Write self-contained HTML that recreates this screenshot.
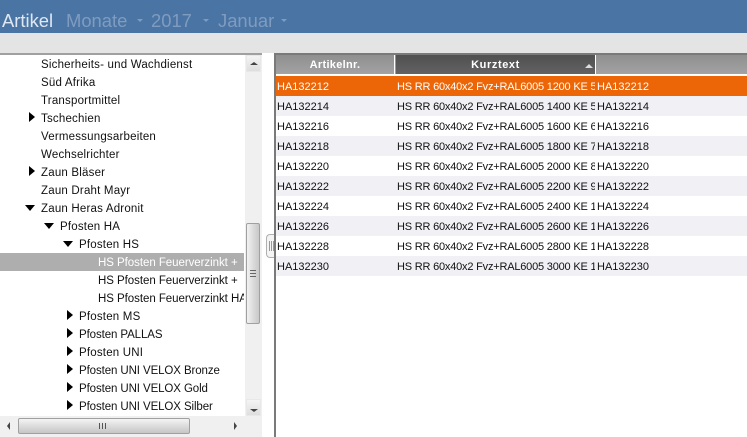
<!DOCTYPE html>
<html><head><meta charset="utf-8">
<style>
html,body{margin:0;padding:0}
body{width:747px;height:437px;position:relative;overflow:hidden;background:#fff;font-family:"Liberation Sans",sans-serif;font-size:11.5px;color:#111}
div{position:absolute;white-space:nowrap;box-sizing:border-box}
#top{left:0;top:0;width:747px;height:33px;background:#4a74a3}
.t{top:10px;font-size:18.4px;line-height:22px;color:#7f9cc0}
.c{top:19px;width:0;height:0;border-left:3px solid transparent;border-right:3px solid transparent;border-top:3px solid #7f9cc0}
#bar{left:0;top:33px;width:747px;height:20px;background:#e4e4e4}
.n{line-height:18px;height:18px;letter-spacing:.2px}
.p{letter-spacing:-.1px}
.h{letter-spacing:-.05px}
.r{width:0;height:0;border-top:5.5px solid transparent;border-bottom:5.5px solid transparent;border-left:6px solid #000}
.d{width:0;height:0;border-left:5.5px solid transparent;border-right:5.5px solid transparent;border-top:6px solid #000}
.row{left:276px;width:471px;height:20px;line-height:20px;font-size:11px}
.row span{position:absolute;top:1px;overflow:hidden;white-space:nowrap}
.a{left:1px;width:116px}.b{left:121px;width:198px;letter-spacing:-.2px}.e{left:321px;width:150px}
</style></head><body>
<div id="top"></div>
<div class="t" style="left:2px;color:#dfe8f2">Artikel</div>
<div class="t" style="left:66px">Monate</div><div class="c" style="left:137px"></div>
<div class="t" style="left:151px">2017</div><div class="c" style="left:203px"></div>
<div class="t" style="left:218px">Januar</div><div class="c" style="left:281px"></div>
<div id="bar"></div>
<div style="left:0;top:53px;width:262px;height:2px;background:#a0a0a0"></div>
<div style="left:0;top:253px;width:244px;height:18px;background:#aeaeae"></div>
<div style="left:0;top:56px;width:244px;height:360px;overflow:hidden">
<div class="n" style="left:41px;top:0">Sicherheits- und Wachdienst</div>
<div class="n" style="left:41px;top:18px">Süd Afrika</div>
<div class="n" style="left:41px;top:36px">Transportmittel</div>
<div class="n" style="left:41px;top:54px">Tschechien</div>
<div class="n" style="left:41px;top:72px">Vermessungsarbeiten</div>
<div class="n" style="left:41px;top:90px">Wechselrichter</div>
<div class="n" style="left:41px;top:108px">Zaun Bläser</div>
<div class="n" style="left:41px;top:126px">Zaun Draht Mayr</div>
<div class="n" style="left:41px;top:144px">Zaun Heras Adronit</div>
<div class="n" style="left:60px;top:162px">Pfosten HA</div>
<div class="n" style="left:79px;top:180px">Pfosten HS</div>
<div class="n h" style="left:98px;top:198px;color:#fff">HS Pfosten Feuerverzinkt +</div>
<div class="n h" style="left:98px;top:216px">HS Pfosten Feuerverzinkt +</div>
<div class="n h" style="left:98px;top:234px">HS Pfosten Feuerverzinkt HA</div>
<div class="n" style="left:79px;top:252px">Pfosten MS</div>
<div class="n p" style="left:79px;top:270px">Pfosten PALLAS</div>
<div class="n" style="left:79px;top:288px">Pfosten UNI</div>
<div class="n p" style="left:79px;top:306px">Pfosten UNI VELOX Bronze</div>
<div class="n p" style="left:79px;top:324px">Pfosten UNI VELOX Gold</div>
<div class="n p" style="left:79px;top:342px">Pfosten UNI VELOX Silber</div>
</div>
<div class="r" style="left:29px;top:112px"></div>
<div class="r" style="left:29px;top:166px"></div>
<div class="d" style="left:25px;top:205px"></div>
<div class="d" style="left:44px;top:223px"></div>
<div class="d" style="left:63px;top:241px"></div>
<div class="r" style="left:67px;top:310px"></div>
<div class="r" style="left:67px;top:328px"></div>
<div class="r" style="left:67px;top:346px"></div>
<div class="r" style="left:67px;top:364px"></div>
<div class="r" style="left:67px;top:382px"></div>
<div class="r" style="left:67px;top:400px"></div>
<div style="left:46px;top:418px;width:3px;height:1px;background:#000"></div>
<!-- vertical scrollbar -->
<div style="left:245px;top:55px;width:17px;height:361px;background:#f0f0f0"></div>
<div style="left:246px;top:55px;width:15px;height:17px;background:linear-gradient(#f4f4f4,#dedede);border:1px solid #e8e8e8"></div>
<div style="left:250px;top:62px;width:0;height:0;border-left:4px solid transparent;border-right:4px solid transparent;border-bottom:3px solid #444"></div>
<div style="left:246px;top:223px;width:14px;height:101px;background:linear-gradient(90deg,#f2f2f2,#dcdcdc 50%,#c8c8c8);border:1px solid #a0a0a0;border-radius:2px"></div>
<div style="left:250px;top:270px;width:6px;height:7px;border-top:1px solid #666;border-bottom:1px solid #666"></div>
<div style="left:250px;top:273px;width:6px;height:1px;background:#666"></div>
<div style="left:246px;top:399px;width:15px;height:17px;background:linear-gradient(#f4f4f4,#dedede);border:1px solid #e8e8e8"></div>
<div style="left:250px;top:409px;width:0;height:0;border-left:4px solid transparent;border-right:4px solid transparent;border-top:3px solid #444"></div>
<!-- horizontal scrollbar -->
<div style="left:0;top:416px;width:262px;height:21px;background:#f0f0f0"></div>
<div style="left:18px;top:418px;width:172px;height:16px;background:linear-gradient(#f4f4f4,#dcdcdc 50%,#c6c6c6);border:1px solid #a0a0a0;border-radius:2px"></div>
<div style="left:99px;top:423px;width:7px;height:6px;background:repeating-linear-gradient(90deg,#555 0 1px,transparent 1px 3px)"></div>
<div style="left:7px;top:422px;width:0;height:0;border-top:4px solid transparent;border-bottom:4px solid transparent;border-right:3px solid #444"></div>
<div style="left:234px;top:422px;width:0;height:0;border-top:4px solid transparent;border-bottom:4px solid transparent;border-left:3px solid #444"></div>
<!-- splitter grip -->
<div style="left:266px;top:234px;width:8px;height:24px;background:#f4f4f4;border:1px solid #b0b0b0;border-right:none;border-radius:4px 0 0 4px"></div>
<div style="left:269px;top:241px;width:5px;height:10px;background:repeating-linear-gradient(90deg,#999 0 1px,transparent 1px 2px)"></div>
<!-- table -->
<div style="left:274px;top:53px;width:473px;height:384px;border-left:2px solid #7a7a7a;border-top:2px solid #7a7a7a"></div>
<div style="left:276px;top:55px;width:471px;height:20px;background:linear-gradient(#8f8f8f,#a2a2a2);border-bottom:1px solid #fff"></div>
<div style="left:276px;top:55px;width:119px;height:20px;line-height:20px;text-align:center;color:#fff;font-weight:bold;font-size:11px;letter-spacing:.3px;border-right:1px solid #fff;border-bottom:1px solid #fff">Artikelnr.</div>
<div style="left:396px;top:55px;width:200px;height:20px;line-height:20px;text-align:center;color:#fff;font-weight:bold;font-size:11px;letter-spacing:.6px;background:linear-gradient(#505050,#626262);border-right:1px solid #fff;border-bottom:1px solid #fff">Kurztext</div>
<div style="left:585px;top:64px;width:0;height:0;border-left:4px solid transparent;border-right:4px solid transparent;border-bottom:4px solid #ddd"></div>
<div class="row" style="top:76px;background:#ec6608;color:#fff"><span class="a">HA132212</span><span class="b">HS RR 60x40x2 Fvz+RAL6005 1200 KE 5</span><span class="e">HA132212</span></div>
<div class="row" style="top:96px;background:#f0f0f5"><span class="a">HA132214</span><span class="b">HS RR 60x40x2 Fvz+RAL6005 1400 KE 5</span><span class="e">HA132214</span></div>
<div class="row" style="top:116px"><span class="a">HA132216</span><span class="b">HS RR 60x40x2 Fvz+RAL6005 1600 KE 6</span><span class="e">HA132216</span></div>
<div class="row" style="top:136px;background:#f0f0f5"><span class="a">HA132218</span><span class="b">HS RR 60x40x2 Fvz+RAL6005 1800 KE 7</span><span class="e">HA132218</span></div>
<div class="row" style="top:156px"><span class="a">HA132220</span><span class="b">HS RR 60x40x2 Fvz+RAL6005 2000 KE 8</span><span class="e">HA132220</span></div>
<div class="row" style="top:176px;background:#f0f0f5"><span class="a">HA132222</span><span class="b">HS RR 60x40x2 Fvz+RAL6005 2200 KE 9</span><span class="e">HA132222</span></div>
<div class="row" style="top:196px"><span class="a">HA132224</span><span class="b">HS RR 60x40x2 Fvz+RAL6005 2400 KE 1</span><span class="e">HA132224</span></div>
<div class="row" style="top:216px;background:#f0f0f5"><span class="a">HA132226</span><span class="b">HS RR 60x40x2 Fvz+RAL6005 2600 KE 1</span><span class="e">HA132226</span></div>
<div class="row" style="top:236px"><span class="a">HA132228</span><span class="b">HS RR 60x40x2 Fvz+RAL6005 2800 KE 1</span><span class="e">HA132228</span></div>
<div class="row" style="top:256px;background:#f0f0f5"><span class="a">HA132230</span><span class="b">HS RR 60x40x2 Fvz+RAL6005 3000 KE 1</span><span class="e">HA132230</span></div>
</body></html>
